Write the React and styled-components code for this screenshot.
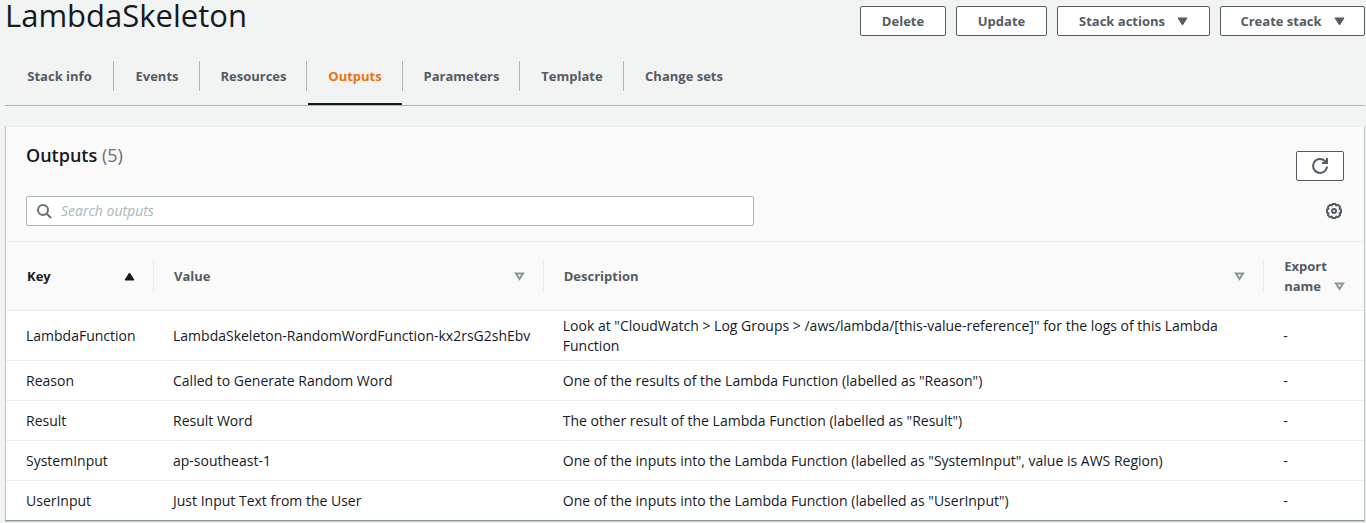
import React from "react";
import styled, { createGlobalStyle } from "styled-components";

const GlobalStyle = createGlobalStyle`
  *, *::before, *::after { box-sizing: border-box; }
  body {
    margin: 0;
    background: #f2f3f3;
    color: #16191f;
    font: 400 14px/20px "Open Sans", "Noto Sans", sans-serif;
  }
  button, input { font: inherit; }
`;

const Page = styled.main`
  padding: 0 1px 2px 5px;
`;

const Header = styled.header`
  display: flex;
  justify-content: space-between;
  align-items: flex-start;
  height: 47px;
`;

const Title = styled.h1`
  margin: 0;
  font-size: 31px;
  line-height: 30px;
  font-weight: 400;
`;

const Actions = styled.div`
  display: flex;
  gap: 10px;
  padding-top: 6px;
`;

const Button = styled.button`
  display: flex;
  align-items: center;
  justify-content: center;
  gap: 12px;
  width: ${(p) => p.$width}px;
  height: 30px;
  padding: 0;
  border: 1px solid #545b64;
  border-radius: 2px;
  background: #fff;
  color: #545b64;
  font-size: 13px;
  font-weight: 700;
  white-space: nowrap;
`;

const Tabs = styled.nav`
  display: flex;
  height: 59px;
  border-bottom: 1px solid #aab7b8;
`;

const TabItem = styled.div`
  display: flex;
  align-items: flex-start;
  width: ${(p) => p.$width}px;
  &::after {
    content: "";
    width: 1px;
    height: 30px;
    margin-top: 14px;
    background: ${(p) => (p.$last ? "transparent" : "#aab7b8")};
  }
`;

const TabLink = styled.a`
  flex: 1;
  height: 58px;
  margin-left: 1px;
  padding-top: 19px;
  border-bottom: 2px solid ${(p) => (p.$active ? "#16191f" : "transparent")};
  color: ${(p) => (p.$active ? "#ec7211" : "#545b64")};
  font-size: 13px;
  font-weight: 700;
  text-align: center;
  text-decoration: none;
  white-space: nowrap;
`;

const Panel = styled.section`
  margin-top: 20px;
  border: 1px solid #eaeded;
  border-left-color: #c3c8c8;
  border-right-color: #c3c8c8;
  border-bottom-color: #879596;
  background: #fafafa;
  box-shadow: 0 1px 1px rgba(0, 28, 36, 0.15);
`;

const PanelTop = styled.div`
  display: flex;
  justify-content: space-between;
  padding: 18px 20px 0;
  height: 69px;
`;

const PanelTitle = styled.h2`
  margin: 0;
  font-size: 18px;
  line-height: 20px;
  font-weight: 600;
`;

const Count = styled.span`
  color: #687078;
  font-weight: 400;
`;

const RefreshButton = styled(Button)`
  margin-top: 6px;
`;

const FilterRow = styled.div`
  display: flex;
  justify-content: space-between;
  align-items: center;
  padding: 0 20px 15px;
`;

const SearchBox = styled.label`
  display: flex;
  align-items: center;
  gap: 9px;
  width: 55.2%;
  height: 30px;
  padding: 0 9px;
  border: 1px solid #aab7b8;
  border-radius: 2px;
  background: #fff;
`;

const SearchInput = styled.input`
  flex: 1;
  min-width: 0;
  padding: 0;
  border: 0;
  outline: 0;
  background: transparent;
  color: #16191f;
  &::placeholder {
    color: #aab7b8;
    font-style: italic;
    opacity: 1;
  }
`;

const IconButton = styled.button`
  display: flex;
  padding: 0 2px;
  border: 0;
  background: none;
  color: #545b64;
`;

const Table = styled.table`
  width: 100%;
  table-layout: fixed;
  border-collapse: separate;
  border-spacing: 0;
`;

const Col = styled.col`
  width: ${(p) => p.$width};
`;

const HeadCell = styled.th`
  height: 69px;
  padding: 17px 0;
  border-top: 1px solid #eaeded;
  color: ${(p) => (p.$sorted ? "#16191f" : "#545b64")};
  font-size: 13px;
  font-weight: 700;
  text-align: left;
`;

const HeadInner = styled.div`
  display: flex;
  align-items: ${(p) => (p.$last ? "flex-end" : "center")};
  justify-content: space-between;
  min-height: 34px;
  padding: 0 18px 0 20px;
  border-right: 1px solid ${(p) => (p.$last ? "transparent" : "#eaeded")};
  margin: ${(p) => (p.$last ? "-3px 0" : "0")};
  ${HeadCell}:first-child & {
    padding-left: 21px;
  }
`;

const SortIcon = styled.svg`
  display: block;
  flex: none;
  margin-bottom: ${(p) => (p.$last ? "5px" : "0")};
`;

const Cell = styled.td`
  height: 40px;
  padding: 5px 4px 4px 19px;
  border-top: 1px solid #eaeded;
  background: #fff;
  vertical-align: middle;
  &:first-child {
    padding-left: 20px;
  }
`;

const CaretDown = () => (
  <svg width="11" height="9" viewBox="0 0 11 9" aria-hidden="true">
    <path d="M1 1h9L5.500 8z" fill="currentColor" stroke="currentColor" strokeLinejoin="round" />
  </svg>
);

const Sort = ({ sorted, last }) => (
  <SortIcon $last={last} width="11" height="9" viewBox="0 0 11 9" aria-hidden="true">
    {sorted ? (
      <path d="M5.500 1L10 8H1z" fill="#16191f" stroke="#16191f" strokeLinejoin="round" />
    ) : (
      <path d="M2 1.500h7L5.500 7z" fill="none" stroke="#879596" strokeWidth="2" />
    )}
  </SortIcon>
);

const SearchIcon = () => (
  <svg width="16" height="16" viewBox="0 0 16 16" fill="none" stroke="#687078" strokeWidth="2" aria-hidden="true">
    <circle cx="7" cy="7" r="5" />
    <path d="M10.500 10.500l4.500 4.500" />
  </svg>
);

const RefreshIcon = () => (
  <svg width="18" height="18" viewBox="0 0 18 18" fill="none" stroke="currentColor" strokeWidth="2" aria-hidden="true">
    <path d="M16 9.500a7 7 0 1 1-2-5.500l1.500 1.500" />
    <path d="M16 1v5h-5" />
  </svg>
);

const GearIcon = () => (
  <svg width="16" height="16" viewBox="0 0 16 16" fill="none" stroke="currentColor" strokeWidth="2" strokeLinejoin="round" aria-hidden="true">
    <path d="M6.500 1h3l.6 1.500 2-.6 2 2-.6 2 1.500.6v3l-1.500.6.6 2-2 2-2-.6-.6 1.500h-3l-.6-1.500-2 .6-2-2 .6-2L1 9.500v-3l1.500-.6-.6-2 2-2 2 .6z" />
    <circle cx="8" cy="8" r="2" />
  </svg>
);

const tabs = [
  { label: "Stack info", width: 109 },
  { label: "Events", width: 86 },
  { label: "Resources", width: 107 },
  { label: "Outputs", width: 96, active: true },
  { label: "Parameters", width: 117 },
  { label: "Template", width: 104 },
  { label: "Change sets", width: 120 },
];

const columns = [
  { label: "Key", width: "10.9%", sorted: true },
  { label: "Value", width: "28.7%" },
  { label: "Description", width: "53.05%" },
  { label: "Export name", width: "7.35%", last: true },
];

const rows = [
  [
    "LambdaFunction",
    "LambdaSkeleton-RandomWordFunction-kx2rsG2shEbv",
    'Look at "CloudWatch > Log Groups > /aws/lambda/[this-value-reference]" for the logs of this Lambda Function',
  ],
  ["Reason", "Called to Generate Random Word", 'One of the results of the Lambda Function (labelled as "Reason")'],
  ["Result", "Result Word", 'The other result of the Lambda Function (labelled as "Result")'],
  [
    "SystemInput",
    "ap-southeast-1",
    'One of the inputs into the Lambda Function (labelled as "SystemInput", value is AWS Region)',
  ],
  ["UserInput", "Just Input Text from the User", 'One of the inputs into the Lambda Function (labelled as "UserInput")'],
];

export default function App() {
  return (
    <>
      <GlobalStyle />
      <Page>
        <Header>
          <Title>LambdaSkeleton</Title>
          <Actions>
            <Button $width={86}>Delete</Button>
            <Button $width={91}>Update</Button>
            <Button $width={153}>
              Stack actions <CaretDown />
            </Button>
            <Button $width={145}>
              Create stack <CaretDown />
            </Button>
          </Actions>
        </Header>
        <Tabs>
          {tabs.map((t, i) => (
            <TabItem key={t.label} $width={t.width} $last={i === tabs.length - 1}>
              <TabLink href="#" $active={t.active}>
                {t.label}
              </TabLink>
            </TabItem>
          ))}
        </Tabs>
        <Panel>
          <PanelTop>
            <PanelTitle>
              Outputs <Count>(5)</Count>
            </PanelTitle>
            <RefreshButton $width={48} aria-label="Refresh">
              <RefreshIcon />
            </RefreshButton>
          </PanelTop>
          <FilterRow>
            <SearchBox>
              <SearchIcon />
              <SearchInput type="text" placeholder="Search outputs" aria-label="Search outputs" />
            </SearchBox>
            <IconButton aria-label="Preferences">
              <GearIcon />
            </IconButton>
          </FilterRow>
          <Table>
            <colgroup>
              {columns.map((c) => (
                <Col key={c.label} $width={c.width} />
              ))}
            </colgroup>
            <thead>
              <tr>
                {columns.map((c) => (
                  <HeadCell key={c.label} $sorted={c.sorted}>
                    <HeadInner $last={c.last}>
                      {c.label}
                      <Sort sorted={c.sorted} last={c.last} />
                    </HeadInner>
                  </HeadCell>
                ))}
              </tr>
            </thead>
            <tbody>
              {rows.map((r) => (
                <tr key={r[0]}>
                  {r.map((text) => (
                    <Cell key={text}>{text}</Cell>
                  ))}
                  <Cell>-</Cell>
                </tr>
              ))}
            </tbody>
          </Table>
        </Panel>
      </Page>
    </>
  );
}
